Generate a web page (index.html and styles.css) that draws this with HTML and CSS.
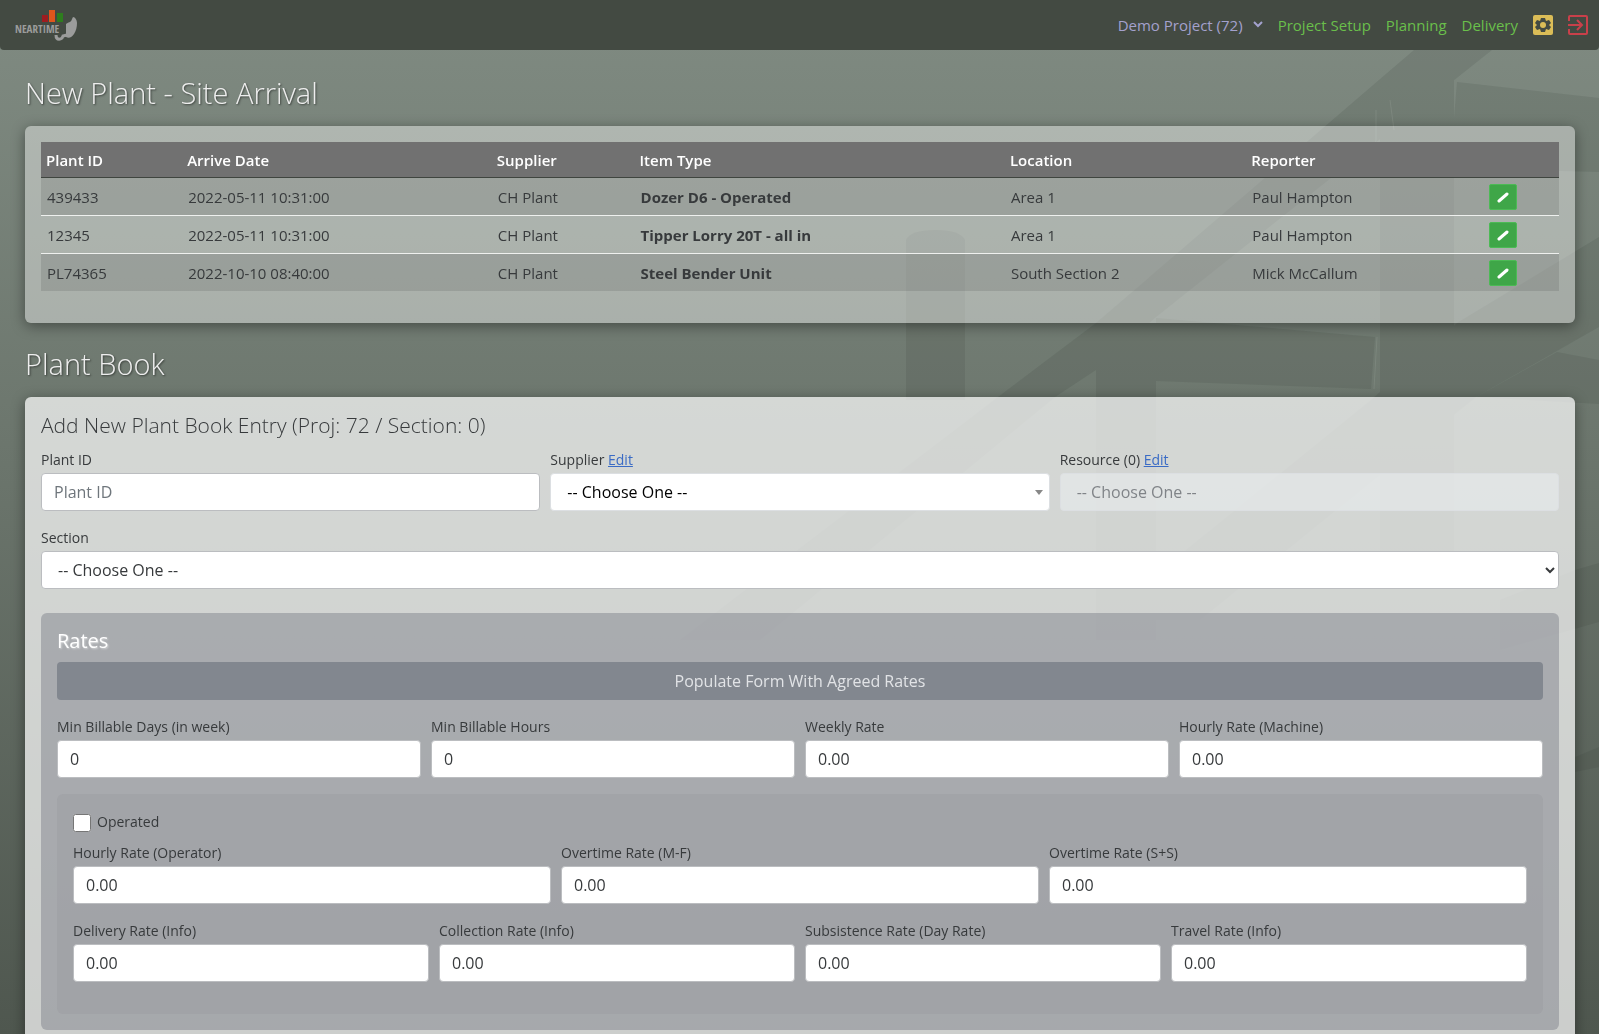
FILE: index.html
```html
<!DOCTYPE html>
<html lang="en">
<head>
	<meta charset="utf-8">
	<title>Neartime - Plant</title>
	<meta name="viewport" content="width=device-width, initial-scale=1.0">
	<link rel="stylesheet" href="styles.css">
</head>
<body>
	<!-- bridge backdrop -->
	<svg class="backdrop" viewBox="0 0 1599 1034" preserveAspectRatio="none" aria-hidden="true">
		<g fill="#39423b" opacity=".14">
			<path d="M1414 50H1492L1156 317L1096 370L1055 397L760 640H680L998 397L1096 323Z"/>
			<path d="M1096 323H1156V640H1096Z"/>
			<path d="M1380 80L1454 70V560H1380Z"/>
			<path d="M1457 82L1599 98V172L1450 168Z"/>
			<path d="M1156 318L1375 337L1371 389L1156 381Z"/>
			<path d="M1599 237L1457 323L1371 400L1100 620H1200L1476 397L1599 327Z"/>
			<path d="M906 240Q910 230 936 230Q960 230 965 240V400H906Z"/>
			<path d="M1557 352L1599 360V404L1476 397Z"/>
			<path d="M1500 600L1575 570L1599 563V622L1500 650Z"/>
			<path d="M1575 757L1599 747V767L1575 772Z"/>
		</g>
		<g fill="none" stroke="#a9b3ab" opacity=".2">
			<path d="M1376 110V140L1371 170M1377 337L1374 389M1390 100L1394 130"/>
		</g>
	</svg>

	<nav class="navbar">
		<a class="brand" href="#" aria-label="Neartime">
			<svg width="64" height="34" viewBox="0 0 64 34">
				<path fill="#9e1c20" d="M27 7h6v7h-6z"/>
				<path fill="#e0561c" d="M34 2h6v12h-6z"/>
				<path fill="#2e7d1e" d="M42 5h6v9h-6z"/>
				<path fill="#9b9c9b" d="M51 16C53 14 56 15 57 11L58 9C60 9 62 12 62 15C62 19 61 23 59 26C57 29 54 31 51 29Z"/>
				<path fill="none" stroke="#9b9c9b" stroke-width="3" d="M41 27C41 33 47 32 48 28L52 27"/>
				<text class="brand-text" x="0" y="25">NEARTIME</text>
			</svg>
		</a>
		<div class="nav-links">
			<select class="project" aria-label="Project">
				<option>Demo Project (72)</option>
			</select>
			<a href="#">Project Setup</a>
			<a href="#">Planning</a>
			<a href="#">Delivery</a>
			<a class="icon" href="#" aria-label="Settings">
				<svg width="20" height="20" viewBox="0 0 20 20">
					<rect width="20" height="20" rx="2" fill="#dbbd57"/>
					<path fill="#444b42" d="M8 3h4l1 3 3-1 2 3-2 2 2 2-2 3-3-1-1 3H8l-1-3-3 1-2-3 2-2-2-2 2-3 3 1z"/>
					<circle cx="10" cy="10" r="3" fill="#dbbd57"/>
				</svg>
			</a>
			<a class="icon" href="#" aria-label="Log out">
				<svg width="20" height="20" viewBox="0 0 20 20" fill="none" stroke="#c9404a" stroke-width="2">
					<path d="M1 6V2Q1 1 2 1H18Q19 1 19 2V18Q19 19 18 19H2Q1 19 1 18V14M0 10H13M9 5L14 10L9 15"/>
				</svg>
			</a>
		</div>
	</nav>

	<main class="page">
		<h1>New Plant - Site Arrival</h1>
		<section class="card card-list">
			<table class="arrivals">
				<thead>
					<tr>
						<th class="col-id">Plant ID</th>
						<th class="col-date">Arrive Date</th>
						<th class="col-supplier">Supplier</th>
						<th class="col-item">Item Type</th>
						<th class="col-location">Location</th>
						<th class="col-reporter">Reporter</th>
						<th></th>
					</tr>
				</thead>
				<tbody>
					<tr>
						<td>439433</td>
						<td>2022-05-11 10:31:00</td>
						<td>CH Plant</td>
						<td><b>Dozer D6 - Operated</b></td>
						<td>Area 1</td>
						<td>Paul Hampton</td>
						<td><button class="edit" type="button" aria-label="Edit"><svg width="12" height="12" viewBox="0 0 12 12"><path d="M2 10L10 3"/></svg></button></td>
					</tr>
					<tr>
						<td>12345</td>
						<td>2022-05-11 10:31:00</td>
						<td>CH Plant</td>
						<td><b>Tipper Lorry 20T - all in</b></td>
						<td>Area 1</td>
						<td>Paul Hampton</td>
						<td><button class="edit" type="button" aria-label="Edit"><svg width="12" height="12" viewBox="0 0 12 12"><path d="M2 10L10 3"/></svg></button></td>
					</tr>
					<tr>
						<td>PL74365</td>
						<td>2022-10-10 08:40:00</td>
						<td>CH Plant</td>
						<td><b>Steel Bender Unit</b></td>
						<td>South Section 2</td>
						<td>Mick McCallum</td>
						<td><button class="edit" type="button" aria-label="Edit"><svg width="12" height="12" viewBox="0 0 12 12"><path d="M2 10L10 3"/></svg></button></td>
					</tr>
				</tbody>
			</table>
		</section>

		<h1>Plant Book</h1>
		<form class="card card-form">
			<h2>Add New Plant Book Entry (Proj: 72 / Section: 0)</h2>
			<div class="row">
				<div class="field">
					<label for="plantId">Plant ID</label>
					<input type="text" id="plantId" placeholder="Plant ID">
				</div>
				<div class="field">
					<div class="label-line"><label for="supplier">Supplier</label> <a href="#">Edit</a></div>
					<select id="supplier" class="picker">
						<option>-- Choose One --</option>
					</select>
				</div>
				<div class="field">
					<div class="label-line"><label for="resource">Resource (0)</label> <a href="#">Edit</a></div>
					<select id="resource" class="picker" disabled>
						<option>-- Choose One --</option>
					</select>
				</div>
			</div>
			<div class="row">
				<div class="field">
					<label for="section">Section</label>
					<select id="section">
						<option>-- Choose One --</option>
					</select>
				</div>
			</div>

			<div class="rates">
				<h3>Rates</h3>
				<button class="populate" type="button">Populate Form With Agreed Rates</button>
				<div class="row">
					<div class="field"><label for="minDays">Min Billable Days (in week)</label><input type="text" id="minDays" value="0"></div>
					<div class="field"><label for="minHours">Min Billable Hours</label><input type="text" id="minHours" value="0"></div>
					<div class="field"><label for="weekly">Weekly Rate</label><input type="text" id="weekly" value="0.00"></div>
					<div class="field"><label for="hourly">Hourly Rate (Machine)</label><input type="text" id="hourly" value="0.00"></div>
				</div>
				<div class="operated">
					<div class="check">
						<input type="checkbox" id="operated">
						<label for="operated">Operated</label>
					</div>
					<div class="row">
						<div class="field"><label for="operator">Hourly Rate (Operator)</label><input type="text" id="operator" value="0.00"></div>
						<div class="field"><label for="overtimeWeek">Overtime Rate (M-F)</label><input type="text" id="overtimeWeek" value="0.00"></div>
						<div class="field"><label for="overtimeEnd">Overtime Rate (S+S)</label><input type="text" id="overtimeEnd" value="0.00"></div>
					</div>
					<div class="row">
						<div class="field"><label for="delivery">Delivery Rate (Info)</label><input type="text" id="delivery" value="0.00"></div>
						<div class="field"><label for="collection">Collection Rate (Info)</label><input type="text" id="collection" value="0.00"></div>
						<div class="field"><label for="subsistence">Subsistence Rate (Day Rate)</label><input type="text" id="subsistence" value="0.00"></div>
						<div class="field"><label for="travel">Travel Rate (Info)</label><input type="text" id="travel" value="0.00"></div>
					</div>
				</div>
			</div>
		</form>
	</main>
</body>
</html>
```
FILE: styles.css
```css
* {
	box-sizing: border-box;
}
html {
	background: linear-gradient(#808b82, #6b756c 45%, #4f574f) fixed;
	scrollbar-width: none;
}
body {
	margin: 0;
	font-family: "Open Sans", sans-serif;
	font-size: 16px;
	line-height: 24px;
	color: #373a3c;
}
.backdrop {
	position: fixed;
	top: 0;
	left: 0;
	width: 100%;
	height: 100%;
	z-index: -1;
}
h1, h2, h3 {
	margin: 0;
	font-weight: 300;
}

/* top bar */
.navbar {
	display: flex;
	justify-content: space-between;
	align-items: center;
	height: 50px;
	padding: 0 11px 0 15px;
	background-color: #434a42;
	border-radius: 0 0 4px 4px;
}
.brand, .icon {
	display: flex;
}
.brand svg {
	overflow: visible;
}
.brand-text {
	font: bold 11px "Liberation Sans Narrow", "Open Sans Condensed", "DejaVu Sans Condensed", sans-serif;
	fill: #9b9c9b;
}
.nav-links {
	display: flex;
	align-items: center;
	gap: 15px;
	font-size: 15px;
}
.nav-links a {
	color: #6abf4b;
	text-decoration: none;
}
.project {
	appearance: none;
	padding: 0 20px 0 0;
	border: 0;
	background: url("data:image/svg+xml,%3Csvg xmlns='http://www.w3.org/2000/svg' width='10' height='8' fill='none' stroke='%23a3a1cd' stroke-width='2'%3E%3Cpath d='M1 1L5 5L9 1'/%3E%3C/svg%3E") no-repeat right center;
	font: inherit;
	color: #a3a1cd;
}

/* page */
.page {
	padding: 24px 24px 0 25px;
}
h1 {
	height: 52px;
	font-size: 29px;
	line-height: 37px;
	color: #eee;
	text-shadow: 1px 1px 2px rgba(0, 0, 0, 0.5);
}
.card {
	padding: 16px;
	border-radius: 6px;
	box-shadow: 0 3px 14px rgba(0, 0, 0, 0.4);
}
.card-list {
	margin-bottom: 22px;
	padding-bottom: 32px;
	background-color: rgba(255, 255, 255, 0.4);
}
.card-form {
	background-color: rgba(255, 255, 255, 0.71);
}

.arrivals {
	width: 100%;
	border-collapse: collapse;
	table-layout: fixed;
	font-size: 15px;
}
.arrivals th {
	height: 35px;
	padding: 1px 5px 0;
	background-color: #717171;
	color: #fff;
	font-weight: 600;
	text-align: left;
}
.arrivals td {
	height: 38px;
	padding: 1px 6px 0;
	border-top: 1px solid #eef0ee;
}
.arrivals tbody tr:first-child td {
	border-top-color: #3f453f;
}
.arrivals tbody tr:nth-child(odd) {
	background-color: rgba(0, 0, 0, 0.1);
}
.col-id { width: 9.3%; }
.col-date { width: 20.4%; }
.col-supplier { width: 9.4%; }
.col-item { width: 24.4%; }
.col-location { width: 15.9%; }
.col-reporter { width: 15.6%; }
.edit {
	display: flex;
	align-items: center;
	justify-content: center;
	width: 28px;
	height: 26px;
	padding: 0;
	border: 1px solid #4cba55;
	border-radius: 2px;
	background-color: #3fa648;
	stroke: #fff;
	stroke-width: 3;
	stroke-linecap: round;
}

/* form */
h2 {
	margin-bottom: 12px;
	font-size: 21px;
	line-height: 24px;
}
.row {
	display: flex;
	gap: 10px;
	margin-bottom: 16px;
}
.field {
	flex: 1;
}
.field > label, .label-line {
	display: block;
	height: 24px;
	font-size: 14px;
	line-height: 22px;
}
.label-line a {
	color: #3a6bc5;
}
.field input, .field select {
	display: block;
	width: 100%;
	height: 38px;
	padding: 0 12px;
	border: 1px solid #bbbdc0;
	border-radius: 4px;
	background-color: #fff;
	font: inherit;
	color: #373a3c;
}
.field input::placeholder {
	color: #6f767c;
}
.field .picker {
	appearance: none;
	padding: 0 16px;
	border-color: #dcdfe2;
	color: #000;
	background: #fff url("data:image/svg+xml,%3Csvg xmlns='http://www.w3.org/2000/svg' width='8' height='5' fill='%23888'%3E%3Cpath d='M0 0H8L4 5Z'/%3E%3C/svg%3E") no-repeat right 6px center;
}
.field .picker:disabled {
	background: rgba(233, 236, 239, 0.6);
	color: #808488;
	opacity: 1;
}
.rates {
	margin-top: 24px;
	padding: 16px;
	border-radius: 6px;
	background-color: rgba(130, 132, 142, 0.5);
}
h3 {
	margin-bottom: 9px;
	font-size: 20px;
	line-height: 24px;
	font-weight: 400;
	color: #fff;
	text-shadow: 1px 1px 2px rgba(255, 255, 255, 0.5);
}
.populate {
	display: block;
	width: 100%;
	height: 38px;
	margin-bottom: 16px;
	border: 0;
	border-radius: 4px;
	background-color: #82878f;
	font: 500 16px "Open Sans", sans-serif;
	color: #e1e3e6;
}
.operated {
	padding: 16px;
	border-radius: 6px;
	background-color: rgba(150, 150, 156, 0.3);
}
.check {
	display: flex;
	gap: 6px;
	height: 32px;
	font-size: 14px;
}
.check input {
	width: 18px;
	height: 18px;
	margin: 4px 0 0;
}
```
